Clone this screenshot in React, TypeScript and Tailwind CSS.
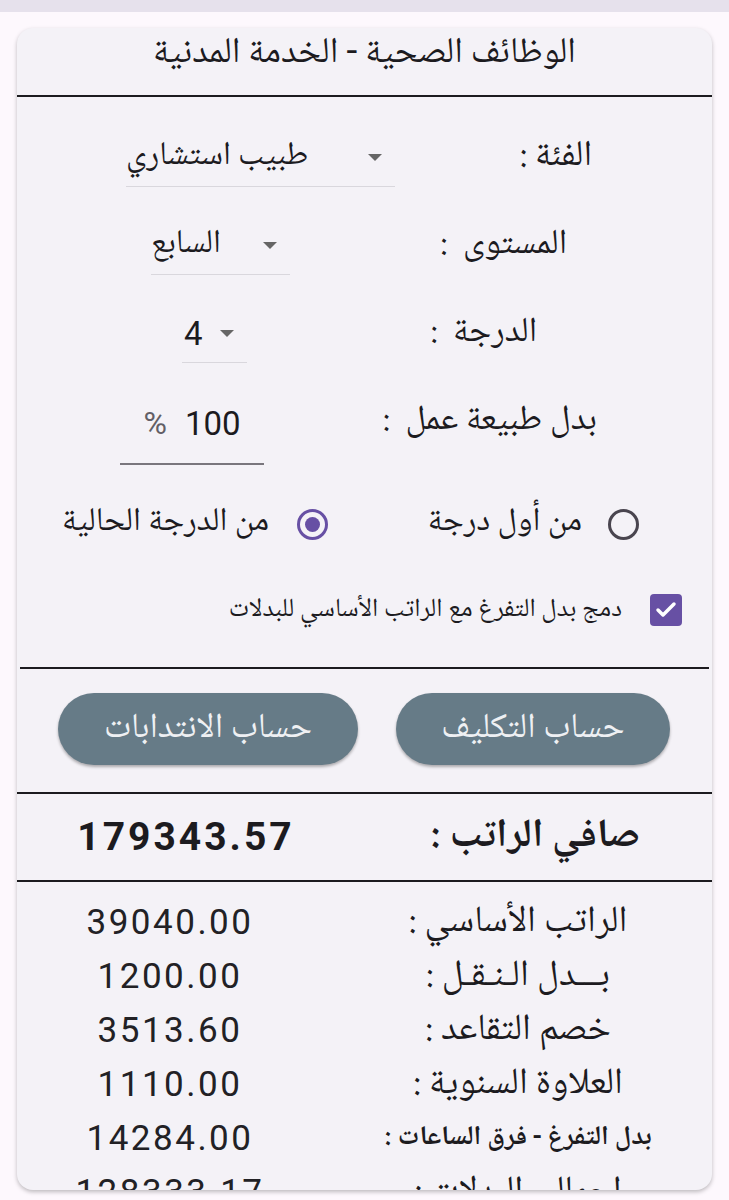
import { Check } from 'lucide-react';

const arabic = "font-['Noto_Naskh_Arabic','Noto_Sans_Arabic','DejaVu_Sans',sans-serif]";
const digits = "font-['Roboto','Liberation_Sans',sans-serif]";

function Caret() {
    return (
        <svg width="16" height="9" viewBox="0 0 16 9" className="shrink-0">
            <path d="M1 1 L15 1 L8 8 Z" fill="#666666" />
        </svg>
    );
}

function Dropdown({ value, numeric, className }: { value: string; numeric?: boolean; className: string }) {
    return (
        <div className={`h-[58px] flex items-center justify-between border-b border-[#d9d7dd] ${className}`}>
            <Caret />
            <span className={`text-[#1c1b1f] ${numeric ? `${digits} text-[33px]` : 'text-[33px]'} leading-none`}>
                {value}
            </span>
        </div>
    );
}

function Radio({ checked }: { checked?: boolean }) {
    return (
        <div
            className={`w-[31px] h-[31px] rounded-full border-[3px] flex items-center justify-center shrink-0 ${checked ? 'border-[#6750a4]' : 'border-[#49454f]'
                }`}
        >
            {checked && <div className="w-[15px] h-[15px] rounded-full bg-[#6750a4]" />}
        </div>
    );
}

const details = [
    { label: 'الراتب الأساسي :', value: '39040.00', size: 'text-[37px]' },
    { label: 'بـــدل الـنـقـل :', value: '1200.00', size: 'text-[37px]' },
    { label: 'خصم التقاعد :', value: '3513.60', size: 'text-[37px]' },
    { label: 'العلاوة السنوية :', value: '1110.00', size: 'text-[37px]' },
    { label: 'بدل التفرغ - فرق الساعات :', value: '14284.00', size: 'text-[27px] font-bold' },
    { label: 'إجمالي البدلات :', value: '128333.17', size: 'text-[37px]' },
];

export default function App() {
    return (
        <div className={`min-h-[1200px] bg-[#fdf8fd] overflow-hidden ${arabic}`}>
            <div className="h-3 bg-[#e6e1ec]" />

            <div
                dir="rtl"
                className="mt-4 ml-[17px] w-[695px] h-[1162px] overflow-hidden rounded-[16px] bg-[#f4f2f7] shadow-[0_2px_4px_rgba(0,0,0,0.25)]"
            >
                {/* Title */}
                <div className="h-[67px] text-center text-[36px] leading-[54px] text-[#1c1b1f]">
                    الوظائف الصحية - الخدمة المدنية
                </div>
                <div className="h-[2px] bg-[#1c1b1f]" />

                {/* Inputs */}
                <div className="pt-[17px]">
                    <div className="h-[88px] flex items-center">
                        <div className="mr-[120px] text-[36px] text-[#1c1b1f]">الفئة :</div>
                        <div className="flex-1" />
                        <Dropdown value="طبيب استشاري" className="w-[269px] ml-[109px] pr-[12px]" />
                    </div>
                    <div className="h-[88px] flex items-center">
                        <div className="mr-[145px] text-[35px] text-[#1c1b1f]">المستوى&nbsp; :</div>
                        <div className="flex-1" />
                        <Dropdown value="السابع" className="w-[139px] ml-[134px] pr-[12px]" />
                    </div>
                    <div className="h-[88px] flex items-center">
                        <div className="mr-[175px] text-[35px] text-[#1c1b1f]">الدرجة&nbsp; :</div>
                        <div className="flex-1" />
                        <Dropdown value="4" numeric className="w-[65px] ml-[165px] pr-[12px] pl-[2px]" />
                    </div>
                    <div className="h-[88px] flex items-center">
                        <div className="mr-[115px] text-[35px] text-[#1c1b1f]">بدل طبيعة عمل&nbsp; :</div>
                        <div className="flex-1" />
                        <div className="w-[144px] ml-[103px] h-[82px] mt-[4px] flex items-center justify-center gap-[18px] border-b-2 border-[#79767d]">
                            <span className={`${digits} text-[33px] text-[#1c1b1f] leading-none`}>100</span>
                            <span className={`${digits} text-[32px] text-[#625f66] leading-none`}>%</span>
                        </div>
                    </div>

                    {/* Radios */}
                    <div className="h-[116px] flex items-center pr-[73px]">
                        <div className="w-[316px] flex items-center gap-[26px]">
                            <Radio />
                            <span className="text-[33px] text-[#1c1b1f]">من أول درجة</span>
                        </div>
                        <div className="w-[316px] flex items-center gap-[28px]">
                            <Radio checked />
                            <span className="text-[33px] text-[#1c1b1f]">من الدرجة الحالية</span>
                        </div>
                    </div>

                    {/* Checkbox */}
                    <div className="h-[56px] flex items-center pr-[30px] gap-[28px]">
                        <div className="w-[32px] h-[32px] rounded-[4px] bg-[#6750a4] flex items-center justify-center shrink-0">
                            <Check size={24} strokeWidth={3.5} className="text-white" />
                        </div>
                        <span className="text-[26px] text-[#1c1b1f]">دمج بدل التفرغ مع الراتب الأساسي للبدلات</span>
                    </div>
                    <div className="h-[29px]" />
                </div>

                <div className="mx-[3px] h-[2px] bg-[#1c1b1f]" />

                {/* Buttons */}
                <div className="pt-[24px] pb-[27px] flex items-center">
                    <button className="mr-[42px] w-[274px] h-[72px] rounded-full bg-[#667b87] text-[#eef0f3] text-[35px] leading-none shadow-[0_2px_3px_rgba(0,0,0,0.3)]">
                        حساب التكليف
                    </button>
                    <button className="mr-[38px] w-[300px] h-[72px] rounded-full bg-[#667b87] text-[#eef0f3] text-[35px] leading-none shadow-[0_2px_3px_rgba(0,0,0,0.3)]">
                        حساب الانتدابات
                    </button>
                </div>

                <div className="h-[2px] bg-[#1c1b1f]" />

                {/* Net salary */}
                <div className="h-[86px] flex items-center">
                    <div className="w-[340px] mr-[7px] text-center text-[40px] leading-none font-bold text-[#1c1b1f]">صافي الراتب :</div>
                    <div className="flex-1" />
                    <div dir="ltr" className={`w-[260px] ml-[39px] text-center ${digits} text-[39px] font-bold tracking-[3px] text-[#1c1b1f] leading-none`}>
                        179343.57
                    </div>
                </div>

                <div className="h-[2px] bg-[#1c1b1f]" />

                {/* Breakdown */}
                <div className="pt-[13px]">
                    {details.map((row) => (
                        <div key={row.value} className="h-[54px] flex items-center">
                            <div className={`w-[374px] mr-[7px] text-center leading-none ${row.size} text-[#1c1b1f]`}>{row.label}</div>
                            <div className="flex-1" />
                            <div dir="ltr" className={`w-[260px] ml-[23px] text-center ${digits} text-[35px] tracking-[2.5px] text-[#222125] leading-none`}>
                                {row.value}
                            </div>
                        </div>
                    ))}
                </div>
            </div>
        </div>
    );
}
